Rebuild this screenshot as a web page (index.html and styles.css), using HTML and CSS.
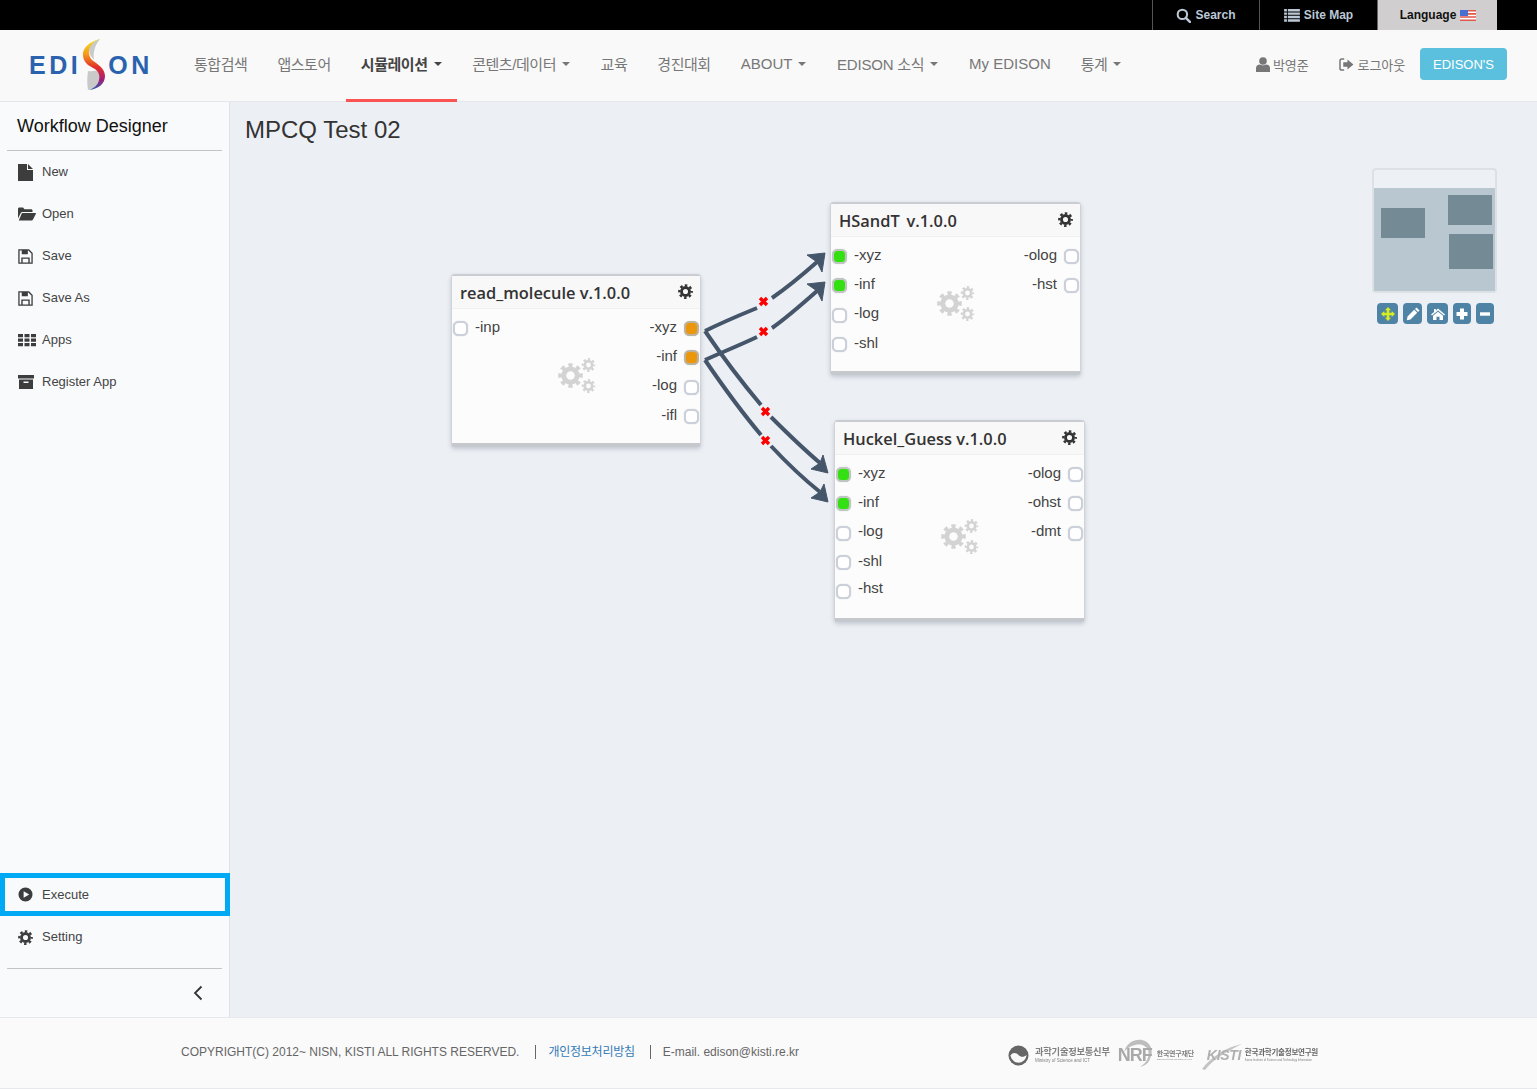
FILE: index.html
```html
<!DOCTYPE html>
<html lang="ko">
<head>
<meta charset="utf-8">
<title>Workflow Designer</title>
<link rel="stylesheet" href="styles.css">
</head>
<body>
<svg class="defs" width="0" height="0" aria-hidden="true">
  <defs>
    <symbol id="i-cog" viewBox="0 0 24 24">
      <circle cx="12" cy="12" r="6.4" fill="none" stroke="currentColor" stroke-width="4.6"/>
      <circle cx="12" cy="12" r="10" fill="none" stroke="currentColor" stroke-width="3.6" pathLength="8" stroke-dasharray=".52 .48" stroke-dashoffset=".26"/>
    </symbol>
    <symbol id="i-gears" viewBox="0 0 38 36">
      <use href="#i-cog" x="0" y="5" width="25" height="25"/>
      <use href="#i-cog" x="23.500" y="0" width="14" height="14"/>
      <use href="#i-cog" x="23.500" y="21" width="14" height="14"/>
    </symbol>
    <linearGradient id="swoosh" x1="0" y1="0" x2="0" y2="1">
      <stop offset="0" stop-color="#f4e21c"/>
      <stop offset=".3" stop-color="#f59a1c"/>
      <stop offset=".55" stop-color="#e2312a"/>
      <stop offset=".8" stop-color="#a31d78"/>
      <stop offset="1" stop-color="#2a62ae"/>
    </linearGradient>
  </defs>
</svg>

<header class="topbar">
  <a class="top-item"><svg class="top-ico" viewBox="0 0 16 16"><circle cx="6.8" cy="6.8" r="5" fill="none" stroke="currentColor" stroke-width="2.2"/><path d="M10.5 10.5l4.3 4.3" stroke="currentColor" stroke-width="2.6" stroke-linecap="round"/></svg>Search</a>
  <a class="top-item top-item-map"><svg class="top-ico top-ico-wide" viewBox="0 0 17 14"><path d="M0 0h3v2.6H0zM4 0h13v2.6H4zM0 3.7h3v2.6H0zM4 3.7h13v2.6H4zM0 7.4h3V10H0zM4 7.4h13V10H4zM0 11.1h3v2.6H0zM4 11.1h13v2.6H4z" fill="currentColor"/></svg>Site Map</a>
  <a class="top-item top-lang">Language<svg class="flag" viewBox="0 0 16 11"><rect width="16" height="11" fill="#fff"/><path d="M0 0h16v1.6H0zM0 3.1h16v1.6H0zM0 6.2h16v1.6H0zM0 9.4h16V11H0z" fill="#e2574c"/><rect width="8" height="6" fill="#4a6fd0"/></svg></a>
</header>

<nav class="mainnav">
  <a class="logo">
    <span class="logo-text">EDI</span>
    <svg class="logo-s" viewBox="0 0 26 54">
      <path d="M19 1C12 3 8 7 8 11C8 15 10 19 13 22C12 16 13 8 19 1Z" fill="#c9c9c9"/>
      <path d="M7 52C6 46 6 40 7 33C10 34 14 32 16 33C19 36 19 40 18 43C17 47 13 50 7 52Z" fill="#c9c9c9"/>
      <path d="M19 1C8 4 1 10 2 18C3 26 9 28 14 31C18 34 19 38 18 42C17 47 13 50 8 52C17 51 24 46 24 38C24 30 16 26 11 22C8 19 7 13 9 9C11 5 14 3 19 1Z" fill="url(#swoosh)"/>
    </svg>
    <span class="logo-text logo-text-end">ON</span>
  </a>
  <ul class="menu">
    <li class="menu-item menu-ko">통합검색</li>
    <li class="menu-item menu-ko">앱스토어</li>
    <li class="menu-item menu-ko menu-active">시뮬레이션<i class="caret"></i></li>
    <li class="menu-item menu-ko">콘텐츠/데이터<i class="caret"></i></li>
    <li class="menu-item menu-ko">교육</li>
    <li class="menu-item menu-ko">경진대회</li>
    <li class="menu-item">ABOUT<i class="caret"></i></li>
    <li class="menu-item menu-mixed">EDISON 소식<i class="caret"></i></li>
    <li class="menu-item">My EDISON</li>
    <li class="menu-item menu-ko">통계<i class="caret"></i></li>
  </ul>
  <div class="usermenu">
    <a class="user-link"><svg class="user-ico" viewBox="0 0 14 15"><circle cx="7" cy="4" r="3.8" fill="currentColor"/><path d="M0 15V11C0 8.500 2 7.500 4 7.500C5 8.500 9 8.500 10 7.500C12 7.500 14 8.500 14 11V15Z" fill="currentColor"/></svg>박영준</a>
    <a class="user-link user-logout"><svg class="logout-ico" viewBox="0 0 16 14"><path d="M5.500 1H3C1.800 1 1 1.800 1 3V11C1 12.200 1.800 13 3 13H5.500" fill="none" stroke="currentColor" stroke-width="1.600"/><path d="M9 1.500L15.500 7L9 12.500V9.300H4.500V4.700H9Z" fill="currentColor"/></svg>로그아웃</a>
    <a class="edison-btn">EDISON'S</a>
  </div>
</nav>

<div class="workspace">
  <aside class="sidebar">
    <h2 class="side-title">Workflow Designer</h2>
    <ul class="side-list">
      <li class="side-item"><svg class="side-ico side-ico-tall" viewBox="0 0 15 17"><path d="M0 0H9V6H15V17H0ZM10 0L15 5H10Z" fill="currentColor"/></svg>New</li>
      <li class="side-item"><svg class="side-ico side-ico-wide" viewBox="0 0 18 14"><path d="M0 2C0 1 .6.500 1.500.500H5L6.500 2.200H13C14 2.200 14.500 2.800 14.500 3.500V5H4.500C3.500 5 3 5.500 2.500 6.500L0 11.500Z" fill="currentColor"/><path d="M4.500 6H17.500C18 6 18 6.500 17.800 7L15 12.500C14.700 13 14.200 13.500 13.500 13.500H.8L3.500 7C3.700 6.500 4 6 4.500 6Z" fill="currentColor"/></svg>Open</li>
      <li class="side-item"><svg class="side-ico" viewBox="0 0 16 16"><path d="M1 1H11.500L15 4.500V15H1Z" fill="none" stroke="currentColor" stroke-width="1.400"/><path d="M4 1H10.500V5.500H4ZM3.500 9H12.500V15H11V10.500H5V15H3.500Z" fill="currentColor"/></svg>Save</li>
      <li class="side-item"><svg class="side-ico" viewBox="0 0 16 16"><path d="M1 1H11.500L15 4.500V15H1Z" fill="none" stroke="currentColor" stroke-width="1.400"/><path d="M4 1H10.500V5.500H4ZM3.500 9H12.500V15H11V10.500H5V15H3.500Z" fill="currentColor"/></svg>Save As</li>
      <li class="side-item"><svg class="side-ico side-ico-wide" viewBox="0 0 18 14"><path d="M0 1H5V4.300H0ZM6.500 1H11.500V4.300H6.500ZM13 1H18V4.300H13ZM0 5.500H5V8.800H0ZM6.500 5.500H11.500V8.800H6.500ZM13 5.500H18V8.800H13ZM0 10H5V13.300H0ZM6.500 10H11.500V13.300H6.500ZM13 10H18V13.300H13Z" fill="currentColor"/></svg>Apps</li>
      <li class="side-item"><svg class="side-ico side-ico-box" viewBox="0 0 16 14"><path d="M0 0H16V3.500H0Z" fill="currentColor"/><path d="M1 4.500H15V14H1ZM5.500 6.500V8H10.500V6.500Z" fill="currentColor" fill-rule="evenodd"/></svg>Register App</li>
    </ul>
    <div class="side-bottom">
      <div class="side-item side-execute"><svg class="side-ico" viewBox="0 0 16 16"><path d="M8 .500A7.500 7.500 0 1 1 8 15.500A7.500 7.500 0 1 1 8 .500ZM6 4.500V11.500L12 8Z" fill="currentColor" fill-rule="evenodd"/></svg>Execute</div>
      <div class="side-item"><svg class="side-ico"><use href="#i-cog"/></svg>Setting</div>
      <div class="side-collapse"><svg class="chevron" viewBox="0 0 10 16"><path d="M8.500 1.500L2 8L8.500 14.500" fill="none" stroke="currentColor" stroke-width="1.800"/></svg></div>
    </div>
  </aside>

  <main class="canvas">
    <h1 class="canvas-title">MPCQ Test 02</h1>

    <svg class="wires" viewBox="0 1 1307 916" width="1307" height="916">
      <g class="wire">
        <path d="M475 230C495 220 510 214 527 207"/>
        <path d="M542 197C555 188 570 176 587 161"/>
        <path d="M475 259C495 250 510 244 527 236"/>
        <path d="M542 227C555 218 570 205 587 190"/>
        <path d="M475 230C490 252 515 285 531 304"/>
        <path d="M541 316C555 330 570 345 590 362"/>
        <path d="M475 259C490 281 515 315 531 334"/>
        <path d="M541 345C555 360 570 375 590 391"/>
      </g>
      <g class="arrow">
        <path d="M595 152L577 154L587 161L592 171Z"/>
        <path d="M595 181L577 183L587 190L592 200Z"/>
        <path d="M598 372L581 368L590 362L593 354Z"/>
        <path d="M598 401L581 397L590 391L594 383Z"/>
      </g>
      <g class="cross">
        <path d="M530 197l7 7M537 197l-7 7"/>
        <path d="M530 227l7 7M537 227l-7 7"/>
        <path d="M532 307l7 7M539 307l-7 7"/>
        <path d="M532 336l7 7M539 336l-7 7"/>
      </g>
    </svg>

    <section class="node node-read">
      <header class="node-head"><span class="node-name">read_molecule v.1.0.0</span><svg class="node-cog"><use href="#i-cog"/></svg></header>
      <div class="node-body">
        <div class="ports">
          <div class="port-row"><i class="port"></i><span class="port-label">-inp</span></div>
        </div>
        <svg class="node-gears"><use href="#i-gears"/></svg>
        <div class="ports ports-out">
          <div class="port-row"><span class="port-label">-xyz</span><i class="port port-orange"></i></div>
          <div class="port-row"><span class="port-label">-inf</span><i class="port port-orange"></i></div>
          <div class="port-row"><span class="port-label">-log</span><i class="port"></i></div>
          <div class="port-row"><span class="port-label">-ifl</span><i class="port"></i></div>
        </div>
      </div>
    </section>

    <section class="node node-hsandt">
      <header class="node-head"><span class="node-name node-name-gap">HSandT v.1.0.0</span><svg class="node-cog"><use href="#i-cog"/></svg></header>
      <div class="node-body">
        <div class="ports">
          <div class="port-row"><i class="port port-green"></i><span class="port-label">-xyz</span></div>
          <div class="port-row"><i class="port port-green"></i><span class="port-label">-inf</span></div>
          <div class="port-row"><i class="port"></i><span class="port-label">-log</span></div>
          <div class="port-row"><i class="port"></i><span class="port-label">-shl</span></div>
        </div>
        <svg class="node-gears"><use href="#i-gears"/></svg>
        <div class="ports ports-out">
          <div class="port-row"><span class="port-label">-olog</span><i class="port"></i></div>
          <div class="port-row"><span class="port-label">-hst</span><i class="port"></i></div>
        </div>
      </div>
    </section>

    <section class="node node-huckel">
      <header class="node-head"><span class="node-name">Huckel_Guess v.1.0.0</span><svg class="node-cog"><use href="#i-cog"/></svg></header>
      <div class="node-body">
        <div class="ports">
          <div class="port-row"><i class="port port-green"></i><span class="port-label">-xyz</span></div>
          <div class="port-row"><i class="port port-green"></i><span class="port-label">-inf</span></div>
          <div class="port-row"><i class="port"></i><span class="port-label">-log</span></div>
          <div class="port-row"><i class="port"></i><span class="port-label">-shl</span></div>
          <div class="port-row"><i class="port"></i><span class="port-label port-label-up">-hst</span></div>
        </div>
        <svg class="node-gears"><use href="#i-gears"/></svg>
        <div class="ports ports-out">
          <div class="port-row"><span class="port-label">-olog</span><i class="port"></i></div>
          <div class="port-row"><span class="port-label">-ohst</span><i class="port"></i></div>
          <div class="port-row"><span class="port-label">-dmt</span><i class="port"></i></div>
        </div>
      </div>
    </section>

    <div class="minimap">
      <div class="mini-view">
        <i class="mini-box mini-a"></i>
        <i class="mini-box mini-b"></i>
        <i class="mini-box mini-c"></i>
      </div>
    </div>
    <div class="map-tools">
      <a class="tool"><svg viewBox="0 0 14 14"><path d="M7 0L10 3.300H8.300V5.700H10.700V4L14 7L10.700 10V8.300H8.300V10.700H10L7 14L4 10.700H5.700V8.300H3.300V10L0 7L3.300 4V5.700H5.700V3.300H4Z" fill="#d6ee1e"/></svg></a>
      <a class="tool tool-mid"><svg viewBox="0 0 14 14"><path d="M10.500 .500L13.500 3.500L12 5L9 2ZM8.200 2.800L11.200 5.800L4.500 12.500L.8 13.200L1.500 9.500Z" fill="#fff"/></svg></a>
      <a class="tool"><svg viewBox="0 0 14 14"><path d="M7 1.500L14 7.500L13 8.500L7 3.500L1 8.500L0 7.500L3 5V2H4.800V3.500ZM7 4.700L12 8.700V13H8.500V9.800H5.500V13H2V8.700Z" fill="#fff"/></svg></a>
      <a class="tool tool-sm"><svg viewBox="0 0 14 14"><path d="M5 1.500H9V5H12.500V9H9V12.500H5V9H1.500V5H5Z" fill="#fff"/></svg></a>
      <a class="tool tool-sm"><svg viewBox="0 0 14 14"><path d="M2 5.300H12V8.700H2Z" fill="#fff"/></svg></a>
    </div>
  </main>
</div>

<footer class="footer">
  <span class="copy">COPYRIGHT(C) 2012~ NISN, KISTI ALL RIGHTS RESERVED.</span>
  <a class="foot-link">개인정보처리방침</a>
  <span class="foot-mail">E-mail. edison@kisti.re.kr</span>
  <div class="partners">
    <div class="partner partner-gov">
      <svg class="gov-mark" viewBox="0 0 22 22"><circle cx="11" cy="11" r="10.500" fill="#666"/><path d="M2.500 11C5 7 9 8 11 10.500C13 13 17 13 19.500 10.500C18.500 16 15 18.500 11 18.500C7 18.500 4 16 2.500 11Z" fill="#fafafa"/></svg>
      <div class="partner-text"><b class="p-ko">과학기술정보통신부</b><small class="p-en">Ministry of Science and ICT</small></div>
    </div>
    <div class="partner partner-nrf">
      <div class="mark-wrap">
        <svg class="nrf-arc" viewBox="0 0 36 28"><path d="M6 13C9 3 17 0 24 1C33 3 36 12 32 20C30 25 26 27 22 28C29 24 32 17 30 11C27 4 15 3 6 13Z" fill="#bdbdbd"/></svg>
        <b class="nrf">NRF</b>
      </div>
      <div class="partner-text"><b class="p-ko p-ko-sm">한국연구재단</b><small class="p-en p-en-xs">National Research Foundation of Korea</small></div>
    </div>
    <div class="partner">
      <div class="mark-wrap">
        <svg class="kisti-arc" viewBox="0 0 40 26"><path d="M0 25C10 12 25 3 40 0C28 6 12 14 3 26Z" fill="#c4c4c4"/></svg>
        <b class="kisti">KISTI</b>
      </div>
      <div class="partner-text"><b class="p-ko p-ko-dark">한국과학기술정보연구원</b><small class="p-en p-en-sm">Korea Institute of Science and Technology Information</small></div>
    </div>
  </div>
</footer>
</body>
</html>
```

FILE: styles.css
```css
* { box-sizing: border-box; }
html, body { margin: 0; padding: 0; }
body {
  width: 1537px;
  height: 1089px;
  display: flex;
  flex-direction: column;
  overflow: hidden;
  font-family: "Liberation Sans", "Noto Sans CJK KR", sans-serif;
  color: #333;
  background: #fafafa;
}
.defs { position: absolute; }

/* top bar */
.topbar {
  height: 30px;
  flex: none;
  background: #000;
  display: flex;
  justify-content: flex-end;
  padding-right: 40px;
}
.top-item {
  width: 107px;
  display: flex;
  align-items: center;
  justify-content: center;
  gap: 4px;
  font-size: 12px;
  font-weight: 700;
  color: #bcc8d6;
  border-left: 1px solid #555;
}
.top-item-map { width: 118px; }
.top-lang { width: 120px; color: #111; background: #d0cece; border-left: 1px solid #666; padding-left: 1px; }
.top-ico { width: 15px; height: 15px; }
.top-ico-wide { width: 16px; height: 13px; }
.flag { width: 16px; height: 11px; }

/* main nav */
.mainnav {
  height: 72px;
  flex: none;
  display: flex;
  align-items: stretch;
  background: #f9f9f9;
  border-bottom: 1px solid #e4e6e9;
  padding-left: 29px;
}
.logo {
  width: 150px;
  display: flex;
  align-items: center;
  padding-bottom: 2px;
}
.logo-text {
  font-size: 25px;
  font-weight: 700;
  letter-spacing: 3.5px;
  color: #2a62ae;
  line-height: 1;
  margin-top: 1px;
}
.logo-text-end { margin-left: 1px; }
.logo-s { width: 26px; height: 54px; margin-top: 1px; flex: none; }
.menu {
  list-style: none;
  margin: 0;
  padding: 0;
  display: flex;
  align-items: stretch;
}
.menu-item {
  padding: 0 15px 2px;
  display: flex;
  align-items: center;
  font-size: 15px;
  color: #777;
  white-space: nowrap;
  margin-bottom: -1px;
  border-bottom: 3px solid transparent;
}
.menu-ko { letter-spacing: -.45px; }
.menu-mixed { letter-spacing: -.2px; }
.menu-active { color: #444; font-weight: 700; border-bottom-color: #fb5252; }
.caret {
  width: 0;
  height: 0;
  margin: 0 .6px 0 6px;
  border-top: 4px solid currentColor;
  border-left: 4px solid transparent;
  border-right: 4px solid transparent;
}
.usermenu {
  margin-left: auto;
  padding: 0 30px 3px 0;
  display: flex;
  align-items: center;
}
.user-link {
  display: flex;
  align-items: center;
  font-size: 13px;
  color: #777;
  letter-spacing: -.1px;
}
.user-ico { width: 14px; height: 15px; margin-right: 3px; }
.user-logout { margin-left: 30px; }
.logout-ico { width: 15px; height: 13px; margin-right: 4px; }
.edison-btn {
  margin-left: 15px;
  width: 87px;
  height: 32px;
  display: flex;
  align-items: center;
  justify-content: center;
  background: #5bc0de;
  border-radius: 4px;
  color: #fff;
  font-size: 13px;
}

/* workspace */
.workspace {
  flex: none;
  height: 915px;
  display: flex;
}
.sidebar {
  width: 230px;
  flex: none;
  display: flex;
  flex-direction: column;
  background: #f9fafc;
  border-right: 1px solid #dde0e5;
}
.side-title {
  margin: 0 7px;
  height: 49px;
  padding: 14px 10px 0;
  font-size: 18px;
  font-weight: 400;
  color: #111;
  border-bottom: 1px solid #c4c4c4;
}
.side-list { list-style: none; margin: 0; padding: 0; flex: 1; }
.side-item {
  height: 42px;
  display: flex;
  align-items: center;
  padding: 0 0 2px 18px;
  font-size: 13px;
  color: #444;
}
.side-ico { width: 15px; height: 15px; margin: 2px 9px 0 0; color: #3d3d3d; flex: none; }
.side-ico-tall { height: 17px; }
.side-ico-wide { width: 18px; height: 14px; margin-right: 6px; }
.side-ico-box { width: 16px; height: 14px; margin-right: 8px; }
.side-execute {
  height: 43px;
  margin-right: -1px;
  padding: 0 0 0 13px;
  border: 5px solid #00a9f4;
}
.side-execute .side-ico { margin-top: 0; }
.side-collapse {
  margin: 10px 7px 0;
  height: 49px;
  border-top: 1px solid #c4c4c4;
  display: flex;
  justify-content: flex-end;
  align-items: center;
  padding: 0 19px 0 0;
}
.chevron { width: 10px; height: 16px; color: #333; }

/* canvas */
.canvas {
  position: relative;
  flex: 1;
  background: #eceff4;
  overflow: hidden;
}
.canvas-title {
  margin: 0;
  padding: 13px 0 0 15px;
  font-size: 24px;
  font-weight: 400;
  line-height: 30px;
  color: #333;
}
.wires { position: absolute; left: 0; top: 0; }
.wire path { fill: none; stroke: #46566a; stroke-width: 4px; stroke-linecap: butt; }
.arrow path { fill: #46566a; stroke: #46566a; stroke-width: 1px; stroke-linejoin: round; }
.cross path { fill: none; stroke: #f00; stroke-width: 3.400px; }

.node {
  position: absolute;
  width: 251px;
  display: flex;
  flex-direction: column;
  background: #fcfcfc;
  border: 2px solid #cfd2d6;
  border-top-color: #c9ccd0;
  border-bottom: 4px solid #c5c8cd;
  border-left-width: 1px;
  border-right-width: 1px;
  border-radius: 4px;
  box-shadow: 0 2px 4px rgba(100, 110, 125, .3);
}
.node-read { left: 221px; top: 172px; width: 250px; height: 173px; }
.node-hsandt { left: 600px; top: 100px; height: 173px; }
.node-huckel { left: 604px; top: 318px; height: 202px; }
.node-head {
  height: 33px;
  flex: none;
  padding: 0 7px 0 8px;
  display: flex;
  align-items: center;
  justify-content: space-between;
  background: #f8f8f8;
  border-bottom: 1px solid #f0f0f0;
}
.node-name {
  font-family: "Open Sans", sans-serif;
  font-size: 16.400px;
  font-weight: 600;
  color: #333;
  white-space: nowrap;
}
.node-name-gap { word-spacing: 2.500px; }
.node-cog { width: 15px; height: 15px; color: #333; margin-top: -2px; }
.node-body {
  position: relative;
  flex: 1;
  display: flex;
  justify-content: space-between;
  padding: 3px 0 0 0;
}
.node-gears {
  position: absolute;
  left: 106px;
  top: 50%;
  margin-top: -18px;
  width: 38px;
  height: 36px;
  color: #d3d3d3;
}
.ports { display: flex; flex-direction: column; }
.ports-out { align-items: flex-end; }
.port-row {
  height: 29.330px;
  display: flex;
  align-items: center;
  font-size: 15px;
  color: #444;
}
.port {
  width: 15px;
  height: 15px;
  flex: none;
  margin-top: 4px;
  background: #fff;
  border: 2px solid #ccd0da;
  border-radius: 5.500px;
  margin-left: 1px;
  box-shadow: 0 0 1px #b9bdc8;
}
.ports-out .port { margin-left: 7px; margin-right: 1px; }
.port-label { margin-left: 7px; line-height: 20px; }
.ports-out .port-label { margin-left: 0; }
.port-label-up { margin-top: -4px; }
.port-green { background: #35e012; border-color: #bfc5bf; }
.port-orange { background: #ec960c; border-color: #bdb39d; }

/* minimap */
.minimap {
  position: absolute;
  left: 1142px;
  top: 66px;
  width: 125px;
  height: 125px;
  padding-top: 18px;
  background: #edf0f5;
  border: 2px solid #dde1e6;
  border-radius: 4px;
}
.mini-view {
  position: relative;
  height: 100%;
  background: #b9c7d0;
}
.mini-box { position: absolute; background: #748b96; }
.mini-a { left: 7px; top: 20px; width: 44px; height: 30px; }
.mini-b { left: 74px; top: 7px; width: 44px; height: 30px; }
.mini-c { left: 75px; top: 46px; width: 44px; height: 35px; }
.map-tools {
  position: absolute;
  left: 1147px;
  top: 201px;
  display: flex;
  gap: 5px;
}
.tool {
  width: 21px;
  height: 21px;
  display: flex;
  align-items: center;
  justify-content: center;
  background: #4f83a5;
  border-radius: 4px;
}
.tool-mid { width: 19px; }
.tool-sm { width: 18px; }
.tool svg { width: 14px; height: 14px; flex: none; }

/* footer */
.footer {
  flex: none;
  height: 72px;
  display: flex;
  align-items: center;
  padding: 0 0 3px 181px;
  background: #fafafa;
  border-top: 1px solid #e6e8eb;
  border-bottom: 1px solid #e6e8eb;
  font-size: 12px;
  color: #666;
}
.foot-link {
  color: #337ab7;
  margin-left: 16px;
  padding-left: 12px;
  border-left: 1px solid #666;
  line-height: 14px;
  letter-spacing: -.25px;
}
.foot-mail {
  margin-left: 15px;
  padding-left: 12px;
  border-left: 1px solid #666;
  line-height: 14px;
}
.partners {
  margin-left: auto;
  margin-right: 219px;
  margin-top: 7px;
  display: flex;
  align-items: center;
  gap: 8px;
  color: #808080;
  filter: blur(.3px);
}
.partner { display: flex; align-items: center; gap: 4px; }
.partner-gov { gap: 6px; }
.partner-text { display: flex; flex-direction: column; }
.gov-mark { width: 21px; height: 21px; }
.p-ko { font-size: 9.300px; line-height: 11px; letter-spacing: -.25px; white-space: nowrap; }
.p-ko-sm { font-size: 7px; line-height: 9px; }
.p-ko-dark { color: #666; font-size: 7.500px; line-height: 10px; }
.p-en { font-size: 4.500px; line-height: 6px; font-weight: 400; white-space: nowrap; }
.p-en-sm { font-size: 2.800px; line-height: 4px; }
.p-en-xs { font-size: 2px; line-height: 3px; }
.mark-wrap { position: relative; display: flex; align-items: center; }
.nrf-arc { position: absolute; left: 0; top: -6px; width: 36px; height: 28px; }
.kisti-arc { position: absolute; left: 0; top: -3px; width: 40px; height: 26px; }
.nrf { position: relative; font-size: 18px; font-weight: 700; color: #a9a9a9; letter-spacing: -1px; width: 35px; }
.kisti { position: relative; font-size: 14px; font-style: italic; font-weight: 700; color: #b0b0b0; letter-spacing: -.3px; margin-left: 5px; width: 34px; }
```
